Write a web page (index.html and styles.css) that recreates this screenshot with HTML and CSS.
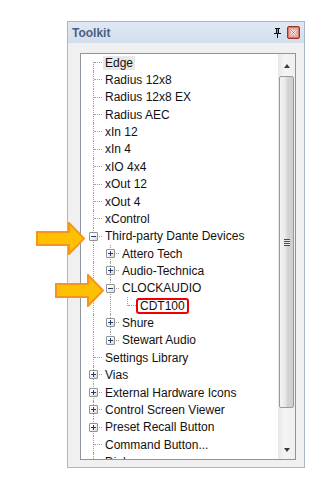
FILE: index.html
```html
<!DOCTYPE html>
<html lang="en">
<head>
  <meta charset="UTF-8">
  <meta name="viewport" content="width=device-width, initial-scale=1.0">
  <title>Toolkit</title>
  <link rel="stylesheet" href="styles.css">
</head>
<body>
  <div class="tk-panel">
    <div class="tk-title">
      <span class="tk-name">Toolkit</span>
      <svg class="tk-pin" width="7" height="10" viewBox="0 0 7 10">
        <path d="M1 0h5v1h-1v4h2v1H0V5h2V1H1z" fill="#111"/>
        <rect x="3" y="1" width="1" height="4" fill="#888"/>
        <rect x="3" y="6" width="1" height="4" fill="#111"/>
      </svg>
      <svg class="tk-close" width="13" height="13" viewBox="0 0 13 13">
        <rect x="0.5" y="0.5" width="12" height="12" rx="1.5" fill="#d9776a" stroke="#9b3328"/>
        <rect x="2" y="2" width="9" height="9" fill="#e9a79c"/>
        <path d="M4 4l5 5M9 4l-5 5" stroke="#fff" stroke-width="2"/>
        <path d="M4 4l5 5M9 4l-5 5" stroke="#7a4a44" stroke-width="0.6"/>
      </svg>
    </div>

    <div class="tk-body">
      <div class="tk-treebox">
        <div class="tree">
          <div class="tree-row"><span class="cell first"></span><span class="label selected">Edge</span></div>
          <div class="tree-row"><span class="cell tee"></span><span class="label">Radius 12x8</span></div>
          <div class="tree-row"><span class="cell tee"></span><span class="label">Radius 12x8 EX</span></div>
          <div class="tree-row"><span class="cell tee"></span><span class="label">Radius AEC</span></div>
          <div class="tree-row"><span class="cell tee"></span><span class="label">xIn 12</span></div>
          <div class="tree-row"><span class="cell tee"></span><span class="label">xIn 4</span></div>
          <div class="tree-row"><span class="cell tee"></span><span class="label">xIO 4x4</span></div>
          <div class="tree-row"><span class="cell tee"></span><span class="label">xOut 12</span></div>
          <div class="tree-row"><span class="cell tee"></span><span class="label">xOut 4</span></div>
          <div class="tree-row"><span class="cell tee"></span><span class="label">xControl</span></div>
          <div class="tree-row"><span class="cell tee"><i class="exp minus"></i></span><span class="label">Third-party Dante Devices</span></div>
          <div class="tree-row"><span class="cell pipe"></span><span class="cell tee"><i class="exp"></i></span><span class="label">Attero Tech</span></div>
          <div class="tree-row"><span class="cell pipe"></span><span class="cell tee"><i class="exp"></i></span><span class="label">Audio-Technica</span></div>
          <div class="tree-row"><span class="cell pipe"></span><span class="cell tee"><i class="exp minus"></i></span><span class="label">CLOCKAUDIO</span></div>
          <div class="tree-row"><span class="cell pipe"></span><span class="cell pipe"></span><span class="cell elbow"></span><span class="label marked">CDT100</span></div>
          <div class="tree-row"><span class="cell pipe"></span><span class="cell tee"><i class="exp"></i></span><span class="label">Shure</span></div>
          <div class="tree-row"><span class="cell pipe"></span><span class="cell elbow"><i class="exp"></i></span><span class="label">Stewart Audio</span></div>
          <div class="tree-row"><span class="cell tee"></span><span class="label">Settings Library</span></div>
          <div class="tree-row"><span class="cell tee"><i class="exp"></i></span><span class="label">Vias</span></div>
          <div class="tree-row"><span class="cell tee"><i class="exp"></i></span><span class="label">External Hardware Icons</span></div>
          <div class="tree-row"><span class="cell tee"><i class="exp"></i></span><span class="label">Control Screen Viewer</span></div>
          <div class="tree-row"><span class="cell tee"><i class="exp"></i></span><span class="label">Preset Recall Button</span></div>
          <div class="tree-row"><span class="cell tee"></span><span class="label">Command Button...</span></div>
          <div class="tree-row"><span class="cell tee"></span><span class="label">Dialog</span></div>
        </div>

        <div class="scrollbar">
          <div class="sb-btn"><span class="sb-arrow up"></span></div>
          <div class="sb-track">
            <div class="sb-thumb"><span class="sb-grip"></span></div>
          </div>
          <div class="sb-btn"><span class="sb-arrow down"></span></div>
        </div>
      </div>
    </div>
  </div>

  <!-- callout arrows -->
  <svg class="callout callout-a" width="50" height="33" viewBox="0 0 50 33">
    <polygon points="1,10 33,10 33,1 48,16.5 33,32 33,23 1,23" fill="#ffc000" stroke="#f7941d" stroke-width="2" stroke-linejoin="miter"/>
  </svg>
  <svg class="callout callout-b" width="50" height="33" viewBox="0 0 50 33">
    <polygon points="1,10 33,10 33,1 48,16.5 33,32 33,23 1,23" fill="#ffc000" stroke="#f7941d" stroke-width="2" stroke-linejoin="miter"/>
  </svg>
</body>
</html>
```

FILE: styles.css
```css
body {
  margin: 0;
  background-color: #fff;
  font-family: "Liberation Sans", Arial, sans-serif;
}

.tk-panel {
  margin: 21px 0 0 67px;
  width: 238px;
  height: 447px;
  box-sizing: border-box;
  border: 1px solid #a9b6c8;
  background-color: #f0f0f0;
  display: flex;
  flex-direction: column;
}

.tk-title {
  flex: none;
  height: 21px;
  display: flex;
  align-items: center;
  padding-left: 4px;
  background: linear-gradient(#dfe8f4, #d3deed);
}

.tk-name {
  flex: 1;
  font-size: 12px;
  font-weight: bold;
  color: #4b5f80;
}

.tk-pin {
  margin-right: 6px;
}

.tk-close {
  margin-right: 4px;
}

.tk-body {
  flex: 1;
  min-height: 0;
  display: flex;
  padding: 10px 8px 7px 12px;
}

.tk-treebox {
  flex: 1;
  min-height: 0;
  display: flex;
  border: 1px solid #8e959e;
  background-color: #fff;
  overflow: hidden;
}

.tree {
  flex: 1;
  padding-left: 4px;
  overflow: hidden;
}

.tree-row {
  height: 17.36px;
  display: flex;
  align-items: center;
  font-size: 12px;
  color: #111;
  white-space: nowrap;
}

/* tree connector cells */
.cell {
  position: relative;
  flex: none;
  width: 17px;
  height: 100%;
}

.cell::before,
.cell::after {
  content: "";
  position: absolute;
}

.cell::before {
  left: 8px;
  top: 0;
  bottom: 0;
  border-left: 1px dotted #a0a0a0;
}

.cell::after {
  left: 9px;
  right: 0;
  top: 8px;
  border-top: 1px dotted #a0a0a0;
}

.cell.pipe::after {
  display: none;
}

.cell.first::before {
  top: 8px;
}

.cell.elbow::before {
  bottom: auto;
  height: 9px;
}

.exp {
  position: absolute;
  z-index: 1;
  left: 4px;
  top: 4px;
  width: 9px;
  height: 9px;
  box-sizing: border-box;
  border: 1px solid #919191;
  border-radius: 1px;
  background: linear-gradient(135deg, #fff 30%, #d8d8d8);
}

.exp::before,
.exp::after {
  content: "";
  position: absolute;
  background-color: #243b6b;
}

.exp::before {
  left: 1px;
  top: 3px;
  width: 5px;
  height: 1px;
}

.exp::after {
  left: 3px;
  top: 1px;
  width: 1px;
  height: 5px;
}

.exp.minus::after {
  display: none;
}

.label {
  margin-left: 1px;
  padding: 0 2px;
  line-height: 14px;
}

.label.selected {
  background-color: #e8e8e8;
}

.label.marked {
  margin-left: 0;
  border: 2px solid #f00000;
  border-radius: 3px;
  line-height: 12px;
}

/* scrollbar */
.scrollbar {
  flex: none;
  width: 17px;
  display: flex;
  flex-direction: column;
  background: linear-gradient(90deg, #e8e8e8, #f4f4f4 40%, #f0f0f0);
}

.sb-btn {
  flex: none;
  height: 22px;
  display: flex;
  align-items: center;
  justify-content: center;
}

.sb-arrow {
  width: 0;
  height: 0;
  border-left: 3.5px solid transparent;
  border-right: 3.5px solid transparent;
}

.sb-arrow.up {
  border-bottom: 4px solid #3c3c3c;
  margin-top: 1px;
}

.sb-arrow.down {
  border-top: 4px solid #3c3c3c;
  margin-top: 3px;
}

.sb-track {
  flex: 1;
  min-height: 0;
  padding-bottom: 29px;
  display: flex;
}

.sb-thumb {
  flex: 1;
  margin: 0 1px;
  border: 1px solid #9a9a9a;
  border-radius: 2px;
  background: linear-gradient(90deg, #f4f4f4, #e6e6e6 45%, #d4d4d4 55%, #cfcfcf);
  display: flex;
  align-items: center;
  justify-content: center;
}

.sb-grip {
  width: 6px;
  height: 7px;
  background: repeating-linear-gradient(#4e4e4e 0 1px, #e8e8e8 1px 2px);
}

/* annotation arrows laid over the screenshot */
.callout {
  position: absolute;
}

.callout-a {
  left: 36px;
  top: 222px;
}

.callout-b {
  left: 55px;
  top: 274px;
}
```
